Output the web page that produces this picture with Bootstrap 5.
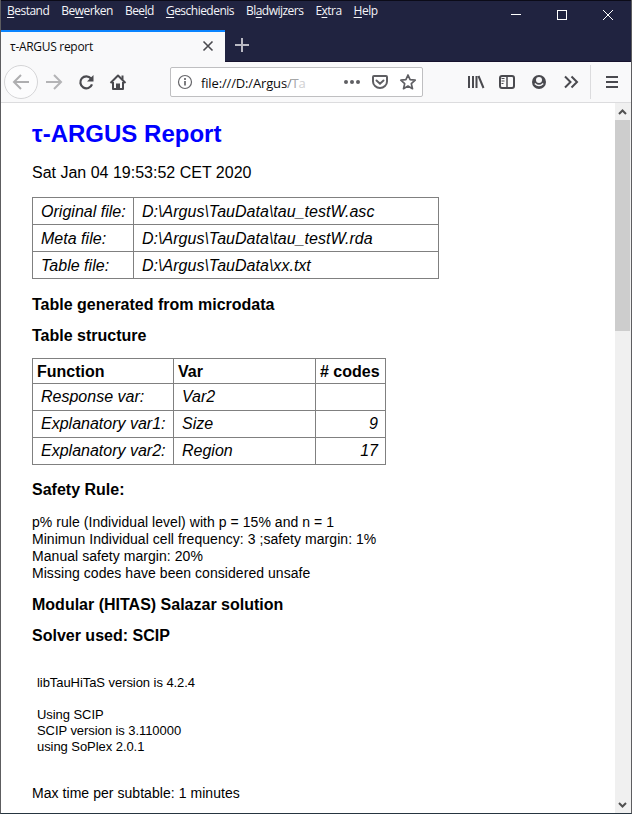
<!DOCTYPE html>
<html lang="nl">
<head>
<meta charset="utf-8">
<meta name="viewport" content="width=device-width, initial-scale=1">
<title>τ-ARGUS report</title>
<link href="https://cdn.jsdelivr.net/npm/bootstrap@5.3.0/dist/css/bootstrap.min.css" rel="stylesheet">
<style>
html, body { height: 100%; overflow: hidden; }
.window { width: 632px; height: 814px; border: solid #5d5d60; border-width: 0 1px 0 1px; border-bottom: 1px solid #263540; background: #fff; }
.chrome-ui { font-family: "Open Sans", "Noto Sans", sans-serif; }
.titlebar { height: 62px; background: #202340; border-top: 1px solid #0b0b18; border-bottom: 1px solid #16122e; flex: none; }
.menus { height: 29px; padding-left: 6px; gap: 12px; }
.menus span { font-size: 12px; line-height: 18px; color: #f4f4f8; white-space: nowrap; display: block; height: 18px; margin-top: 1px; letter-spacing: -.52px; }
.menus u { text-underline-offset: 2px; text-decoration-thickness: 1px; }
.controls { width: 138px; height: 29px; }
.controls svg { display: block; }
.tabs { height: 32px; }
.tab-active { width: 224px; height: 32px; background: #f9f9fa; border-top: 2px solid #0a84ff; padding: 0 9px; }
.tab-active span { font-size: 12px; letter-spacing: -.3px; line-height: 30px; color: #0c0c0d; }
.toolbar { height: 41px; background: #f9f9fa; border-bottom: 1px solid #dcdcde; flex: none; }
.toolbar svg, .tabs svg { display: block; flex: none; }
.urlbar { width: 253px; height: 30px; border: 1px solid #bfbfc1; border-radius: 2px; background: #fff; padding: 0 5px 0 6px; margin-left: 35px; }
.url-text { font-size: 13px; letter-spacing: -.15px; width: 108px; margin-left: 8px; overflow: hidden; white-space: nowrap; line-height: 28px; padding-top: 1px; color: #0c0c0d; }
.url-text .f0 { color: #77777a; } .url-text .f1 { color: #a6a6a8; } .url-text .f2 { color: #d0d0d2; }
.viewport { min-height: 0; }
.report { font-family: "Liberation Sans", Arial, sans-serif; color: #000; padding: 17px 0 0 31px; }
.report h1 { font-size: 24px; line-height: 28px; font-weight: 700; color: #00f; margin: 0 0 15px; }
.report h2 { font-size: 16px; line-height: 18px; font-weight: 700; padding-top: 1px; margin: 0 0 12px; }
.stamp { font-size: 16px; line-height: 18px; padding-top: 1px; margin: 0 0 15px; }
.grid-table { border-collapse: collapse; table-layout: fixed; font-size: 16px; line-height: 18px; }
.grid-table th, .grid-table td { border: 1px solid #808080; white-space: nowrap; }
.grid-table td { height: 27px; padding: 2px 8px 0; font-style: italic; }
.grid-table th { height: 25px; padding: 2px 4px 0; }
.files { width: 407px; margin-bottom: 16px; }
.files td { letter-spacing: .02px; }
.struct { width: 354px; margin: 13px 0 15px; }
.struct td { padding-top: 0; }
.struct td:last-child { padding-right: 7px; }
.rules { font-size: 14px; line-height: 17px; letter-spacing: .05px; margin: 15px 0 13px; }
.log { font: 13px/16px "Liberation Sans", Arial, sans-serif; letter-spacing: -.06px; margin: 30px 0 30px 5px; }
.scroller { width: 16px; background: #f0f0f0; flex: none; }
.scroller svg { display: block; flex: none; }
.thumb { width: 15px; height: 211px; background: #cdcdcd; }
</style>
</head>
<body>
<div class="window d-flex flex-column">
  <header class="titlebar chrome-ui">
    <div class="menus d-flex">
      <span><u>B</u>estand</span><span>Be<u>w</u>erken</span><span>Bee<u>l</u>d</span><span><u>G</u>eschiedenis</span><span>Bl<u>a</u>dwijzers</span><span>E<u>x</u>tra</span><span><u>H</u>elp</span>
      <div class="controls ms-auto">
        <svg width="138" height="29" fill="none" stroke="#fff" shape-rendering="crispEdges"><path d="M18 13.5h10M64.500 9.500h9v9h-9z"/><path d="M110 9l10 10M120 9l-10 10" shape-rendering="auto"/></svg>
      </div>
    </div>
    <div class="tabs d-flex">
      <div class="tab-active d-flex justify-content-between"><span>τ-ARGUS report</span>
        <svg width="16" height="28" fill="none" stroke="#4a4a4f" stroke-width="1.600"><path d="M3.500 9.500l9 9M12.500 9.500l-9 9"/></svg>
      </div>
      <svg width="34" height="32" fill="none" stroke="#babac4" stroke-width="2"><path d="M10 15h14M17 8v14"/></svg>
    </div>
  </header>
  <nav class="toolbar chrome-ui d-flex align-items-center">
    <svg width="134" height="40" fill="none" stroke="#4a4a4f" stroke-width="2">
      <circle cx="20" cy="20" r="16.500" fill="#fcfcfd" stroke="#d5d5d7" stroke-width="1"/>
      <path d="M28 20H13M20 13l-7 7 7 7" stroke="#aeaeb0"/>
      <path d="M45 20h15M53 13l7 7-7 7" stroke="#b4b4b6"/>
      <path d="M90 16.500A6 6 0 1 0 91 22.300" stroke-width="2.200"/><path d="M92.500 13v6.500H86z" fill="#4a4a4f" stroke="none"/>
      <path d="M109.500 21l7.500-7.500 7.500 7.500M112 20v7h10v-7" stroke-width="2" stroke-linejoin="round"/><path d="M120.500 13.500h2v4h-2zM115 21.500h4v5.500h-4z" fill="#4a4a4f" stroke="none"/>
    </svg>
    <div class="urlbar d-flex align-items-center">
      <svg width="16" height="16" fill="none" stroke="#66666a"><circle cx="8" cy="8" r="6.500" stroke-width="1.200"/><path d="M8 7v4.500M8 4v2" stroke-width="1.700"/></svg>
      <div class="url-text">file:///D:/Argus<span class="f0">/</span><span class="f1">T</span><span class="f2">a</span></div>
      <svg class="ms-auto" width="76" height="28" fill="none" stroke="#5f5f63" stroke-width="2">
        <g fill="#5f5f63" stroke="none"><circle cx="5" cy="14" r="2"/><circle cx="11" cy="14" r="2"/><circle cx="17" cy="14" r="2"/></g>
        <path d="M33 8h12a1 1 0 0 1 1 1v4.500a7 6.500 0 0 1-14 0V9a1 1 0 0 1 1-1z"/><path d="M35.500 12.500l3.500 3.200 3.500-3.200" stroke-linecap="round"/>
        <path d="M67 7l2.100 4.700 5.100.5-3.900 3.400 1.200 5.100-4.500-2.700-4.500 2.700 1.200-5.100-3.900-3.400 5.100-.5z" stroke-width="1.700" stroke-linejoin="round"/>
      </svg>
    </div>
    <svg class="ms-auto" width="170" height="40" fill="none" stroke="#4a4a4f" stroke-width="2">
      <path d="M8 14v12M12 14v12M15.500 14v12M17.500 14l5 12"/>
      <rect x="39" y="14" width="14" height="12" rx="2"/><path d="M46 14v12" stroke-width="1.500"/><path d="M40.500 16.500h3M40.500 19h3M40.500 21.500h2" stroke-width="1"/>
      <circle cx="78" cy="20" r="6"/><circle cx="78" cy="20" r="5.500" fill="#4a4a4f" stroke="none"/><path d="M73 19.500a5 5 0 0 1 10 0h-2.500a2.600 2.600 0 0 0-5 0z" fill="#4a4a4f" stroke="none"/><circle cx="78" cy="18" r="3" fill="#f9f9fa" stroke="none"/><path d="M73.800 21.500q4.200 4.200 8.400 0" stroke="#f9f9fa" stroke-width="1.400"/>
      <path d="M104 14.500l5.500 5.500-5.500 5.500M110.500 14.500l5.500 5.500-5.500 5.500"/>
      <path d="M129.500 3v34" stroke="#dcdcde" stroke-width="1"/>
      <path d="M145 15h12M145 20h12M145 25h12"/>
    </svg>
  </nav>
  <div class="viewport d-flex flex-fill">
    <main class="report flex-fill">
      <h1>τ-ARGUS Report</h1>
      <p class="stamp">Sat Jan 04 19:53:52 CET 2020</p>
      <table class="grid-table files">
        <colgroup><col width="101"><col width="305"></colgroup>
        <tbody>
        <tr><td>Original file:</td><td>D:\Argus\TauData\tau_testW.asc</td></tr>
        <tr><td>Meta file:</td><td>D:\Argus\TauData\tau_testW.rda</td></tr>
        <tr><td>Table file:</td><td>D:\Argus\TauData\xx.txt</td></tr>
        </tbody>
      </table>
      <h2>Table generated from microdata</h2>
      <h2>Table structure</h2>
      <table class="grid-table struct">
        <colgroup><col width="141"><col width="142"><col width="70"></colgroup>
        <thead><tr><th>Function</th><th>Var</th><th># codes</th></tr></thead>
        <tbody>
        <tr><td>Response var:</td><td>Var2</td><td></td></tr>
        <tr><td>Explanatory var1:</td><td>Size</td><td class="text-end">9</td></tr>
        <tr><td>Explanatory var2:</td><td>Region</td><td class="text-end">17</td></tr>
        </tbody>
      </table>
      <h2>Safety Rule:</h2>
      <p class="rules">p% rule (Individual level) with p = 15% and n = 1<br>Minimun Individual cell frequency: 3 ;safety margin: 1%<br>Manual safety margin: 20%<br>Missing codes have been considered unsafe</p>
      <h2>Modular (HITAS) Salazar solution</h2>
      <h2>Solver used: SCIP</h2>
      <pre class="log">libTauHiTaS version is 4.2.4

Using SCIP
SCIP version is 3.110000
using SoPlex 2.0.1</pre>
      <p class="rules">Max time per subtable: 1 minutes</p>
    </main>
    <aside class="scroller d-flex flex-column">
      <svg width="15" height="17" fill="none" stroke="#505050" stroke-width="2"><path d="M4 11l3.500-3.500L11 11"/></svg>
      <div class="thumb"></div>
      <svg class="mt-auto" width="15" height="17" fill="none" stroke="#505050" stroke-width="2"><path d="M4 7l3.500 3.500L11 7"/></svg>
    </aside>
  </div>
</div>
<script src="https://cdn.jsdelivr.net/npm/bootstrap@5.3.0/dist/js/bootstrap.bundle.min.js"></script>
</body>
</html>
